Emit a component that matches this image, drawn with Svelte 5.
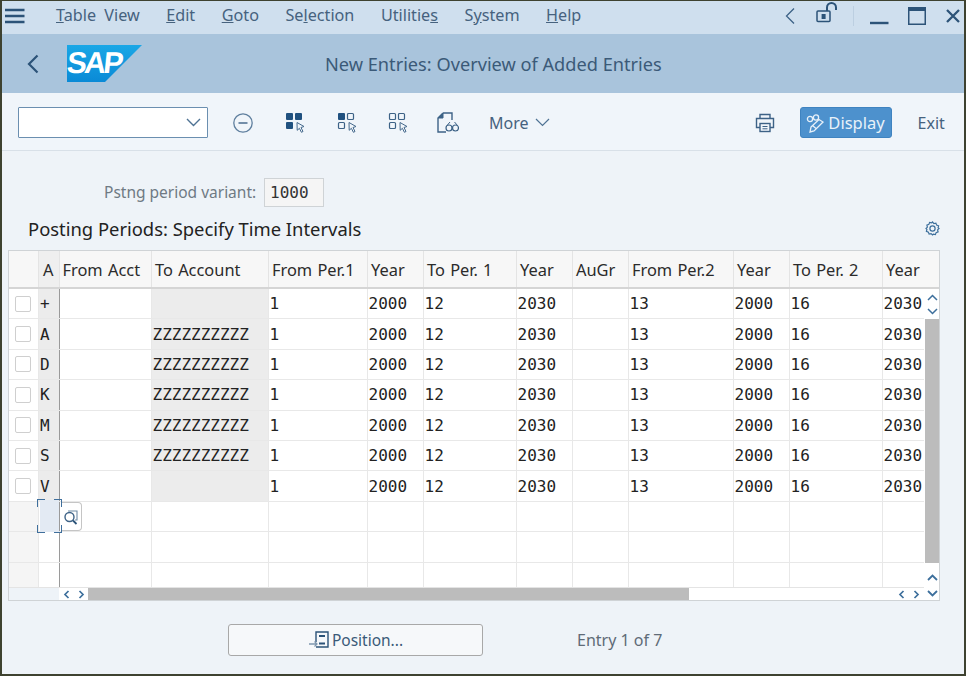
<script>
  const menu = [
    ['', 'T', 'able View'], ['', 'E', 'dit'], ['', 'G', 'oto'], ['Se', 'l', 'ection'],
    ['Utilitie', 's', ''], ['S', 'y', 'stem'], ['', 'H', 'elp']
  ];
  const heads = ['', 'A', 'From Acct', 'To Account', 'From Per.1', 'Year', 'To Per. 1', 'Year', 'AuGr', 'From Per.2', 'Year', 'To Per. 2', 'Year'];
  const rows = [
    ['+', ''], ['A', 'ZZZZZZZZZZ'], ['D', 'ZZZZZZZZZZ'], ['K', 'ZZZZZZZZZZ'],
    ['M', 'ZZZZZZZZZZ'], ['S', 'ZZZZZZZZZZ'], ['V', '']
  ];
  const tail = ['1', '2000', '12', '2030', '', '13', '2000', '16', '2030'];
  const empties = [0, 1, 2];
</script>

<div class="window">
  <header class="menubar">
    <svg class="burger" width="20" height="16" viewBox="0 0 20 16"><path d="M0 2h19.5M0 8h19.5M0 14h19.5" stroke="#2c5378" stroke-width="2.4"/></svg>
    <nav class="menu">
      {#each menu as m}
        <span>{m[0]}<u>{m[1]}</u>{m[2]}</span>
      {/each}
    </nav>
    <div class="winctl">
      <svg class="c1" width="12" height="18" viewBox="0 0 12 18"><path d="M10 1.5 2.5 9l7.5 7.5" fill="none" stroke="#3d6286" stroke-width="1.3"/></svg>
      <svg class="c2" width="23" height="21" viewBox="0 0 23 21"><rect x="1" y="9" width="13" height="10.5" rx="1" fill="none" stroke="#2c5378" stroke-width="1.5"/><rect x="5.6" y="12" width="4" height="5" fill="#2c5378"/><path d="M11 9V5.5a4.5 4.5 0 0 1 9 0V8" fill="none" stroke="#2c5378" stroke-width="2"/></svg>
      <i class="sep"></i>
      <svg class="c3" width="19" height="4" viewBox="0 0 19 4"><path d="M0 2h18.5" stroke="#2c5378" stroke-width="2.4"/></svg>
      <svg class="c4" width="18" height="18" viewBox="0 0 18 18"><rect x=".75" y=".75" width="16.5" height="16.5" fill="none" stroke="#2c5378" stroke-width="1.5"/><rect x="0" y="0" width="18" height="4" fill="#2c5378"/></svg>
      <svg class="c5" width="14" height="14" viewBox="0 0 14 14"><path d="M1 1l12 12M13 1 1 13" stroke="#2c5378" stroke-width="2.3"/></svg>
    </div>
  </header>

  <div class="titlebar">
    <svg class="back" width="12" height="20" viewBox="0 0 12 20"><path d="M10.5 1.5 2 10l8.5 8.5" fill="none" stroke="#2c5378" stroke-width="2.2"/></svg>
    <div class="logo">
      <svg width="75" height="37" viewBox="0 0 75 37"><defs><linearGradient id="g" x1="0" x2="0" y1="0" y2="1"><stop offset="0" stop-color="#1aa7e6"/><stop offset="1" stop-color="#0a8ad6"/></linearGradient></defs><path d="M0 0h75L38 37H0z" fill="url(#g)"/></svg>
      <span>SAP</span>
    </div>
    <h1>New Entries: Overview of Added Entries</h1>
  </div>

  <div class="toolbar">
    <div class="combo">
      <svg width="15" height="9" viewBox="0 0 15 9"><path d="M1 1l6.5 6.5L14 1" fill="none" stroke="#4f7394" stroke-width="1.4"/></svg>
    </div>
    <svg class="t t1" width="20" height="20" viewBox="0 0 20 20"><circle cx="10" cy="10" r="9.2" fill="none" stroke="#5f7f9e" stroke-width="1.3"/><path d="M5.5 10h9" stroke="#3d6286" stroke-width="1.4"/></svg>
    <svg class="t t2" width="22" height="22" viewBox="0 0 22 22"><g fill="#20517f"><rect x="1" y="1" width="7" height="7" rx="1"/><rect x="10" y="1" width="7" height="7" rx="1"/><rect x="1" y="10" width="7" height="7" rx="1"/></g><path d="M12 10.5l7 4-3 1 2 4-1.6.8-2-4-2.2 2z" fill="#f0f5fa" stroke="#45698c" stroke-width="1"/></svg>
    <svg class="t t3" width="22" height="22" viewBox="0 0 22 22"><rect x="1" y="1" width="7" height="7" rx="1" fill="#20517f"/><g fill="none" stroke="#3d6286" stroke-width="1.2"><rect x="10.5" y="1.5" width="6" height="6" rx="1"/><rect x="1.5" y="10.5" width="6" height="6" rx="1"/></g><path d="M12 10.5l7 4-3 1 2 4-1.6.8-2-4-2.2 2z" fill="#f0f5fa" stroke="#45698c" stroke-width="1"/></svg>
    <svg class="t t4" width="22" height="22" viewBox="0 0 22 22"><g fill="none" stroke="#3d6286" stroke-width="1.2"><rect x="1.5" y="1.5" width="6" height="6" rx="1"/><rect x="10.5" y="1.5" width="6" height="6" rx="1"/><rect x="1.5" y="10.5" width="6" height="6" rx="1"/></g><path d="M12 10.5l7 4-3 1 2 4-1.6.8-2-4-2.2 2z" fill="#f0f5fa" stroke="#45698c" stroke-width="1"/></svg>
    <svg class="t t5" width="22" height="22" viewBox="0 0 22 22"><path d="M6 1h9v7M6 1 1 6v14h8" fill="none" stroke="#3d6286" stroke-width="1.4"/><path d="M1 6h5V1z" fill="#3d6286" stroke="#3d6286"/><circle cx="12" cy="16" r="3" fill="none" stroke="#3d6286" stroke-width="1.2"/><circle cx="18.5" cy="16" r="3" fill="none" stroke="#3d6286" stroke-width="1.2"/><path d="M10 13.5l3-3.5M20.5 13.5l-3-3.5" stroke="#3d6286"/></svg>
    <span class="more">More
      <svg width="15" height="9" viewBox="0 0 15 9"><path d="M1 1l6.5 6.5L14 1" fill="none" stroke="#4f7394" stroke-width="1.2"/></svg>
    </span>
    <svg class="print" width="20" height="20" viewBox="0 0 20 20"><g fill="none" stroke="#3d6286" stroke-width="1.4"><path d="M5 5V1.5h10V5"/><path d="M5 14.5H1.5V5.5h17v9H15"/><rect x="5" y="10.5" width="10" height="8"/></g><path d="M7.5 13.5h5M7.5 15.8h5" stroke="#3d6286"/></svg>
    <button class="display">
      <svg width="20" height="20" viewBox="0 0 20 20"><g fill="none" stroke="#e8f1f9" stroke-width="1.3"><circle cx="4" cy="6" r="2.6"/><circle cx="10" cy="4.5" r="2.6"/><path d="M6.4 5.4l1.2-.4"/><path d="M5 14l8-7.5 4 2.5-9 9-4 1z"/><path d="M6.5 12.5l3.5 3"/></g></svg>
      Display
    </button>
    <span class="exit">Exit</span>
  </div>

  <main class="content">
    <div class="variant">
      <label for="v">Pstng period variant:</label>
      <output id="v" class="mono">1000</output>
    </div>
    <div class="heading">
      <h2>Posting Periods: Specify Time Intervals</h2>
      <svg width="15" height="15" viewBox="0 0 15 15"><g fill="none" stroke="#3d6f9c" stroke-width="1.2"><path d="M7.5 1l1.4 1.6 2-.5.7 2 2 .7-.5 2L14 7.5l-1.4 1.4.5 2-2 .7-.7 2-2-.5L7.5 14l-1.4-1.4-2 .5-.7-2-2-.7.5-2L1 7.5l1.4-1.4-.5-2 2-.7.7-2 2 .5z"/><circle cx="7.5" cy="7.5" r="2.6"/></g></svg>
    </div>

    <section class="table">
      <div class="row head">
        {#each heads as h}<div class="cell">{h}</div>{/each}
      </div>
      <div class="rows">
        {#each rows as r}
          <div class="row data">
            <div class="cell sel"><i class="check"></i></div>
            <div class="cell key mono">{r[0]}</div>
            <div class="cell"></div>
            <div class="cell shade mono">{r[1]}</div>
            {#each tail as t}<div class="cell mono">{t}</div>{/each}
          </div>
        {/each}
        {#each empties as e}
          <div class="row blank">
            <div class="cell selblank"></div>
            {#each heads.slice(1) as _}<div class="cell"></div>{/each}
          </div>
        {/each}
      </div>
      <div class="vscroll">
        <div class="arrows">
          <svg width="11" height="7" viewBox="0 0 11 7"><path d="M1 6l4.5-4.5L10 6" fill="none" stroke="#3d6f9c" stroke-width="1.5"/></svg>
          <svg width="11" height="7" viewBox="0 0 11 7"><path d="M1 1l4.5 4.5L10 1" fill="none" stroke="#3d6f9c" stroke-width="1.5"/></svg>
        </div>
        <div class="vthumb"></div>
        <div class="arrows low">
          <svg width="11" height="7" viewBox="0 0 11 7"><path d="M1 6l4.5-4.5L10 6" fill="none" stroke="#3d6f9c" stroke-width="1.8"/></svg>
          <svg width="11" height="7" viewBox="0 0 11 7"><path d="M1 1l4.5 4.5L10 1" fill="none" stroke="#3d6f9c" stroke-width="1.8"/></svg>
        </div>
      </div>
      <div class="hscroll">
        <div class="hlead"></div>
        <div class="harrows">
          <svg width="7" height="9" viewBox="0 0 7 9"><path d="M5.5 1 2 4.5 5.5 8" fill="none" stroke="#3d6f9c" stroke-width="1.7"/></svg>
          <svg width="7" height="9" viewBox="0 0 7 9"><path d="M1.5 1 5 4.5 1.5 8" fill="none" stroke="#3d6f9c" stroke-width="1.7"/></svg>
        </div>
        <div class="hthumb"></div>
        <div class="htrack"></div>
        <div class="harrows right">
          <svg width="7" height="9" viewBox="0 0 7 9"><path d="M5.5 1 2 4.5 5.5 8" fill="none" stroke="#3d6f9c" stroke-width="1.7"/></svg>
          <svg width="7" height="9" viewBox="0 0 7 9"><path d="M1.5 1 5 4.5 1.5 8" fill="none" stroke="#3d6f9c" stroke-width="1.7"/></svg>
        </div>
      </div>
      <div class="focus"><i class="a"></i><i class="b"></i><i class="c"></i><i class="d"></i></div>
      <div class="f4">
        <svg width="16" height="16" viewBox="0 0 16 16"><path d="M5 2h9v9h-2" fill="none" stroke="#6f8ba6" stroke-width="1.1"/><circle cx="6.5" cy="8" r="4.5" fill="#fff" stroke="#3d6286" stroke-width="1.4"/><path d="M10 11.5l3.5 3.5" stroke="#2c5378" stroke-width="1.8"/></svg>
      </div>
    </section>

    <footer class="foot">
      <button class="position">
        <svg width="24" height="22" viewBox="0 0 24 22"><path d="M8 13V3h12v15H8" fill="none" stroke="#2c5378" stroke-width="1.4"/><path d="M11 7h6M11 14.5h6" stroke="#2c5378" stroke-width="1.8"/><path d="M1 15h8M6.5 12.5 9 15l-2.5 2.5" fill="none" stroke="#7f97ae" stroke-width="1.3"/></svg>
        Position...
      </button>
      <span class="entry">Entry 1 of 7</span>
    </footer>
  </main>
</div>

<style>
  :global(body) { margin: 0; }
  .window {
    width: 966px; height: 676px; box-sizing: border-box;
    border: 1px solid #3e4230; border-width: 1px 2px 2px 2px;
    background: #eef3f8; overflow: hidden;
    font-family: "Noto Sans", "Open Sans", sans-serif; color: #3b5a78;
    display: flex; flex-direction: column;
  }
  .mono { font-family: "DejaVu Sans Mono", monospace; }

  .menubar { height: 33px; box-sizing: border-box; padding: 0 0 4px 3px; background: #cfdfee; display: flex; align-items: center; flex: none; }
  .burger { flex: none; }
  .menu { display: flex; gap: 26.5px; margin: 0 0 2px 31px; font-size: 16.2px; color: #46627e; word-spacing: 4px; }
  .winctl { margin-left: auto; display: flex; align-items: center; height: 100%; }
  .winctl svg { flex: none; }
  .c1 { margin-right: 20px; }
  .c2 { margin-right: 14px; margin-top: -6px; }
  .sep { width: 1px; height: 20px; background: #bccfe1; margin-right: 16px; }
  .c3 { margin-right: 19px; margin-top: 14px; }
  .c4 { margin-right: 20px; }
  .c5 { margin-right: 4px; }

  .titlebar { height: 59px; background: #a9c4dc; display: flex; align-items: center; flex: none; padding-left: 25px; }
  .back { flex: none; }
  .logo { margin-left: 28px; position: relative; width: 75px; height: 37px; margin-top: -1px; }
  .logo span {
    position: absolute; left: 0; top: 3px; font: bold 30px/30px "Liberation Sans", sans-serif;
    color: #fff; letter-spacing: -2.5px; transform: skewX(-6deg);
  }
  h1 { margin: 0 0 0 183px; font-size: 18.2px; font-weight: 400; color: #3b5a78; white-space: nowrap; }

  .toolbar { height: 58px; box-sizing: border-box; padding: 2px 0 0 16px; border-bottom: 1px solid #d8e0e8; background: #f0f5fa; display: flex; align-items: center; flex: none; }
  .toolbar > svg { flex: none; }
  .combo { width: 190px; height: 31px; box-sizing: border-box; background: #fff; border: 1.5px solid #6b8fb0; border-radius: 1px; display: flex; align-items: center; justify-content: flex-end; padding-right: 6px; }
  .t1 { margin-left: 25px; }
  .t2 { margin-left: 32px; }
  .t3 { margin-left: 30px; }
  .t4 { margin-left: 29px; }
  .t5 { margin-left: 27px; }
  .more { margin-left: 30px; font-size: 16px; color: #46627e; display: flex; align-items: center; gap: 6px; }
  .print { margin-left: 205px; }
  .display {
    margin-left: 25px; width: 92px; height: 31px; border: 1px solid #3f83c0; border-radius: 3px; background: #4d91cd; color: #e8f1f9;
    font: 400 16.5px "Noto Sans", sans-serif; display: flex; align-items: center; justify-content: center; gap: 2px; padding: 0;
  }
  .exit { margin-left: 26px; font-size: 16px; color: #46627e; }

  .content { flex: 1; padding: 26px 0 0 6px; display: flex; flex-direction: column; background: #eef3f8; min-height: 0; }
  .variant { display: flex; align-items: center; margin-left: 96px; height: 30px; }
  .variant label { font-size: 15.5px; color: #6f7a84; white-space: nowrap; margin-right: 8px; width: 152px; }
  .variant output { width: 60px; height: 29px; box-sizing: border-box; border: 1px solid #cfd3d6; background: #f5f5f5; color: #333; font-size: 16px; line-height: 27px; padding-left: 5px; }

  .heading { display: flex; align-items: center; justify-content: space-between; box-sizing: border-box; padding-bottom: 6px; margin: 6px 0 0 20px; width: 912px; height: 37px; }
  h2 { margin: 0; font-size: 18.4px; font-weight: 400; color: #222; white-space: nowrap; }

  .table {
    position: relative; width: 932px; height: 351px; box-sizing: border-box; flex: none;
    border: 1px solid #cfd3d6; border-left-width: 1.5px; background: #fff;
    display: grid; grid-template-columns: 915px 15px; grid-template-rows: 38px 298px 13px;
  }

  .row { display: grid; grid-template-columns: 30px 20.5px 92.5px 117px 99px 56px 93px 56px 56px 105px 56px 93px 41px; color: #222; }
  .cell { box-sizing: border-box; border-right: 1.5px solid #e8e8e8; padding-left: 3px; font-size: 16px; white-space: nowrap; overflow: hidden; display: flex; align-items: center; }
  .cell:nth-child(2) { border-right: 1.5px solid #9a9a9a; }
  .cell:last-child { border-right: 0; }
  .head { grid-column: 1 / 3; background: #f7f7f7; border-bottom: 2px solid #d5d5d5; }
  .head .cell { font-size: 16.4px; word-spacing: 1px; color: #2b2b2b; border-right-color: #e4e4e4; }
  .head .cell:nth-child(2) { background: #efefef; padding-left: 4px; }
  .rows { overflow: hidden; }
  .data, .blank { height: 30.4px; box-sizing: border-box; border-bottom: 1.5px solid #e8e8e8; background: #fff; }
  .sel { padding-left: 6px; }
  .check { width: 16px; height: 16px; box-sizing: border-box; border: 1.5px solid #cfcfcf; border-radius: 2px; background: #fff; }
  .key { background: #ececec; padding-left: 1px; }
  .shade { background: #ececec; padding-left: .5px; }
  .data .cell:nth-child(n+5) { padding-left: .5px; }
  .selblank { background: #f5f5f5; }

  .vscroll { grid-column: 2; grid-row: 2 / 4; display: flex; flex-direction: column; background: #fff; padding-left: 1px; box-sizing: border-box; }
  .arrows { height: 30px; display: flex; flex-direction: column; align-items: center; justify-content: center; gap: 7px; flex: none; }
  .arrows.low { height: 37px; justify-content: flex-end; padding-bottom: 3px; box-sizing: border-box; gap: 9px; }
  .vthumb { flex: 1; background: #bcbcbc; }

  .hscroll { grid-column: 1; grid-row: 3; display: flex; background: #fff; border-top: 1px solid #e4e4e4; }
  .hlead { width: 50px; background: #eef3f8; flex: none; }
  .harrows { width: 29px; background: #fff; display: flex; align-items: center; justify-content: center; gap: 8px; flex: none; }
  .hthumb { width: 601px; background: #bcbcbc; flex: none; }
  .htrack { flex: 1; }
  .harrows.right { width: 31px; }

  .focus { position: absolute; left: 27.5px; top: 248px; width: 25px; height: 34px; }
  .focus::before { content: ""; position: absolute; inset: 1px 3px; background: #e3eaf3; }
  .focus i { position: absolute; width: 7px; height: 7px; border: 1.8px solid #3f6f9c; }
  .focus .a { left: 0; top: 0; border-right: 0; border-bottom: 0; }
  .focus .b { right: 0; top: 0; border-left: 0; border-bottom: 0; }
  .focus .c { left: 0; bottom: 0; border-right: 0; border-top: 0; }
  .focus .d { right: 0; bottom: 0; border-left: 0; border-top: 0; }
  .f4 { position: absolute; left: 52.5px; top: 251px; width: 20px; height: 29px; box-sizing: border-box; background: #fff; border: 1.5px solid #c5c5c5; border-left: 0; border-radius: 0 4px 4px 0; display: flex; align-items: center; justify-content: center; }

  .foot { display: flex; align-items: center; margin: 23px 0 0 220px; }
  .position {
    width: 255px; height: 32px; box-sizing: border-box; border: 1.5px solid #a8a8a8; border-radius: 3px; background: #f6f8fa; color: #3b5a78;
    font: 400 15.5px "Noto Sans", sans-serif; display: flex; align-items: center; justify-content: center; gap: 0; padding: 0;
  }
  .entry { margin-left: 94px; font-size: 16px; color: #5f6b77; }
</style>
